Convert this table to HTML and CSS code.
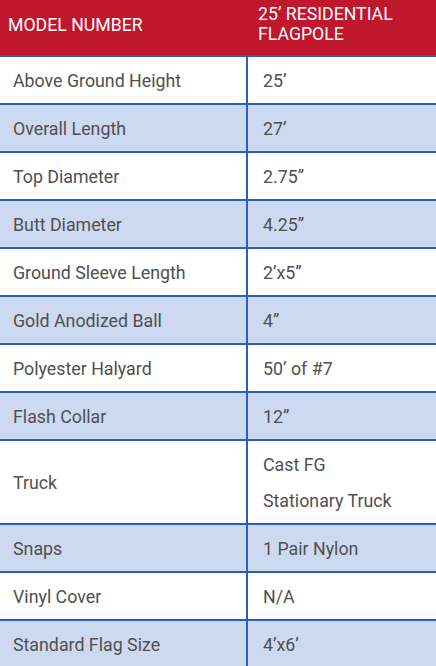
FILE: index.html
```html
<!DOCTYPE html>
<html>
<head>
<meta charset="utf-8">
<link rel="stylesheet" href="styles.css">
</head>
<body>
<table class="spec">
  <thead>
    <tr><th class="c1">MODEL NUMBER</th><th class="c2">25’ RESIDENTIAL FLAGPOLE</th></tr>
  </thead>
  <tbody>
    <tr><td>Above Ground Height</td><td>25’</td></tr>
    <tr class="alt"><td>Overall Length</td><td>27’</td></tr>
    <tr><td>Top Diameter</td><td>2.75”</td></tr>
    <tr class="alt"><td>Butt Diameter</td><td>4.25”</td></tr>
    <tr><td>Ground Sleeve Length</td><td>2’x5”</td></tr>
    <tr class="alt"><td>Gold Anodized Ball</td><td>4”</td></tr>
    <tr><td>Polyester Halyard</td><td>50’ of #7</td></tr>
    <tr class="alt"><td>Flash Collar</td><td>12”</td></tr>
    <tr><td>Truck</td><td><p class="line">Cast FG</p><p class="line">Stationary Truck</p></td></tr>
    <tr class="alt"><td>Snaps</td><td>1 Pair Nylon</td></tr>
    <tr><td>Vinyl Cover</td><td>N/A</td></tr>
    <tr class="alt"><td>Standard Flag Size</td><td>4’x6’</td></tr>
  </tbody>
</table>
</body>
</html>
```
FILE: styles.css
```css
html, body { margin: 0; padding: 0; background: #fff; }
body { font-family: Roboto, "Liberation Sans", sans-serif; }
.spec {
  width: 436px;
  border-collapse: collapse;
  table-layout: fixed;
}
.spec th {
  background: #c0172c;
  color: #fff;
  font-weight: 400;
  font-size: 17.7px;
  line-height: 20px;
  text-align: left;
  height: 56px;
  padding: 0 10px 6px 8px;
  box-sizing: border-box;
  vertical-align: middle;
  border-bottom: 2px solid #2d5fb5;
}
.spec th.c1 { width: 247px; }
.spec th.c2 { padding-left: 11px; padding-bottom: 8px; }
.spec td {
  font-size: 17.8px;
  line-height: 24px;
  color: #505050;
  padding: 12px 12px 10px 13px;
  border-bottom: 2px solid #2d5fb5;
  vertical-align: middle;
}
.spec td + td {
  border-left: 2px solid #2d5fb5;
  padding-left: 15px;
}
.spec tr.alt td { background: #cdd9f1; }
.line { margin: 0; }
.line + .line { margin-top: 12px; }
```
